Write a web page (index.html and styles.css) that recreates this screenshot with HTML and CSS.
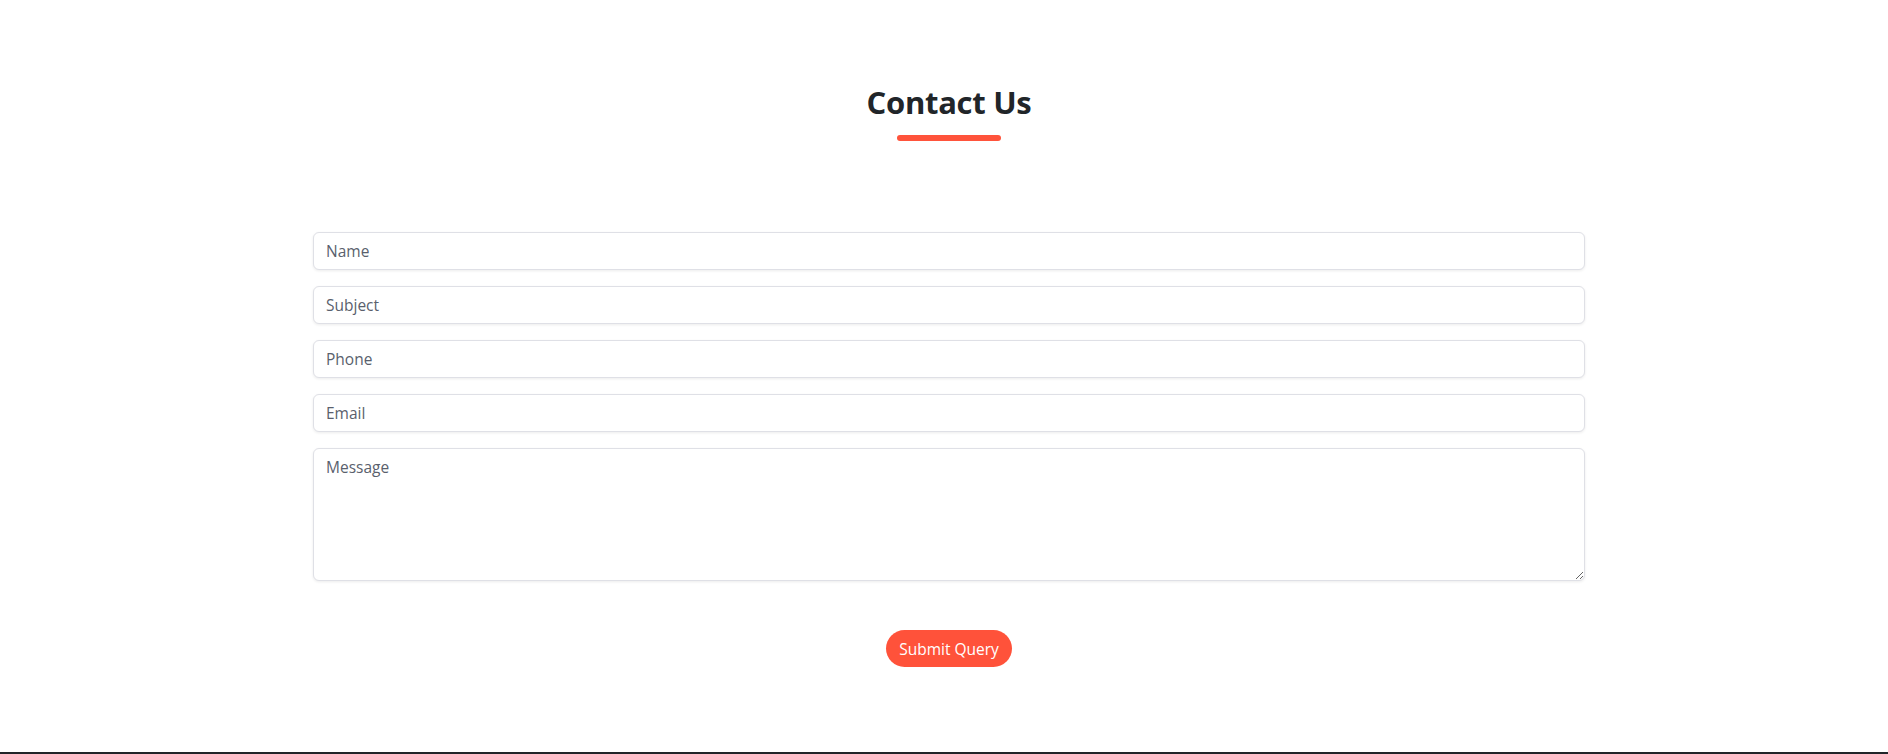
FILE: index.html
```html
<!DOCTYPE html>
<html lang="en">
<head>
<meta charset="utf-8">
<title>Contact Us</title>
<link rel="stylesheet" href="styles.css">
</head>
<body>
<main class="page">
  <section class="contact">
    <div class="heading">
      <h2 class="title">Contact Us</h2>
      <span class="title-bar"></span>
    </div>
    <form class="form">
      <input class="field" type="text" placeholder="Name">
      <input class="field" type="text" placeholder="Subject">
      <input class="field" type="text" placeholder="Phone">
      <input class="field" type="text" placeholder="Email">
      <textarea class="field area" placeholder="Message"></textarea>
      <div class="actions">
        <button class="submit" type="button">Submit Query</button>
      </div>
    </form>
  </section>
  <footer class="footer"></footer>
</main>
</body>
</html>
```

FILE: styles.css
```css
* { box-sizing: border-box; }
html, body { margin: 0; padding: 0; background: #fff; }
body {
  font-family: "Open Sans", "Noto Sans", "Liberation Sans", sans-serif;
  color: #212529;
}
.page { display: flex; flex-direction: column; min-height: 754px; }
.contact {
  height: 752px;
  padding: 83px 0 0 10px;
  display: flex;
  flex-direction: column;
  align-items: center;
}
.heading { display: flex; flex-direction: column; align-items: center; }
.title {
  margin: 0;
  font-size: 31px;
  line-height: 38px;
  font-weight: 700;
  color: #212529;
  letter-spacing: -0.3px;
}
.title-bar {
  display: block;
  width: 104px;
  height: 6px;
  margin-top: 14px;
  border-radius: 3px;
  background: #ff533b;
}
.form {
  width: 1272px;
  margin-top: 91px;
  display: flex;
  flex-direction: column;
  gap: 16px;
}
.field {
  display: block;
  width: 100%;
  height: 38px;
  padding: 6px 12px;
  border: 1px solid #dfe0e6;
  border-radius: 6px;
  box-shadow: 0 1px 3px rgba(0, 0, 0, 0.08);
  font-family: inherit;
  font-size: 15.5px;
  color: #212529;
  background: #fff;
  outline: none;
}
.field::placeholder { color: #5a5f6d; }
.area { height: 133px; resize: vertical; padding-top: 7px; }
.actions { display: flex; justify-content: center; margin-top: 33px; }
.submit {
  height: 37px;
  padding: 0 13px;
  border: none;
  border-radius: 19px;
  background: #ff523a;
  color: #fff;
  font-family: inherit;
  font-size: 15.5px;
  cursor: pointer;
}
.footer { height: 2px; background: #212529; }
```
